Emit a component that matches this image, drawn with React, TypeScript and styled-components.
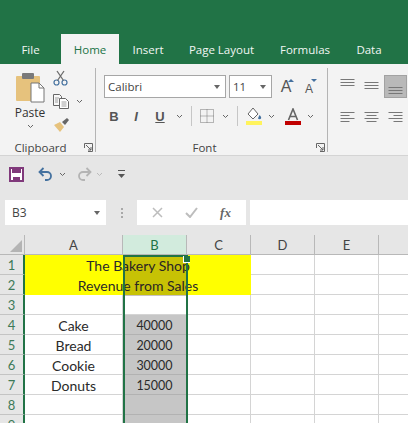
import styled, { createGlobalStyle } from "styled-components";

const GlobalStyle = createGlobalStyle`
  html, body { margin: 0; padding: 0; background: #fff; overflow: hidden; }
`;

const Window = styled.div`
  width: 408px;
  height: 423px;
  overflow: hidden;
  display: flex;
  flex-direction: column;
  font-family: "Open Sans", "Noto Sans", sans-serif;
  color: #333;
`;

const TabBar = styled.div`
  height: 64px;
  flex: none;
  box-sizing: border-box;
  padding: 34px 0 0 0;
  background: #217346;
  display: flex;
`;
const Tab = styled.div<{ $active?: boolean; $w: number }>`
  width: ${(p) => p.$w}px;
  height: 30px;
  flex: none;
  display: flex;
  align-items: center;
  justify-content: center;
  font-size: 11.5px;
  color: ${(p) => (p.$active ? "#217346" : "#f1f6f3")};
  background: ${(p) => (p.$active ? "#f3f3f3" : "transparent")};
`;

const Ribbon = styled.div`
  height: 92px;
  flex: none;
  box-sizing: border-box;
  background: #f3f3f3;
  border-bottom: 1px solid #d4d4d4;
  display: flex;
  padding-top: 4px;
`;
const Group = styled.div<{ $w: number }>`
  width: ${(p) => p.$w}px;
  height: 84px;
  flex: none;
  box-sizing: border-box;
  border-right: 1px solid #b4b4b4;
  display: flex;
  flex-direction: column;
  position: relative;
`;
const GroupBody = styled.div`
  flex: 1;
  display: flex;
`;
const GroupLabel = styled.div`
  height: 18px;
  margin-bottom: -5px;
  font-size: 11.5px;
  line-height: 18px;
  text-align: center;
  color: #444;
  padding-right: 14px;
`;
const Launcher = styled.svg`
  position: absolute;
  right: 2px;
  bottom: 0;
`;

const ClipBoardBody = styled(GroupBody)`
  padding: 2px 0 0 14px;
  gap: 6px;
`;
const PasteBlock = styled.div`
  width: 32px;
  padding-top: 2px;
  display: flex;
  flex-direction: column;
  align-items: center;
`;
const PasteText = styled.div`
  font-size: 12px;
  line-height: 14px;
  margin: 3px 0 4px;
`;
const SmallStack = styled.div`
  display: flex;
  flex-direction: column;
  gap: 8px;
  padding-left: 1px;
`;
const IconRow = styled.div`
  display: flex;
  align-items: center;
  gap: 7px;
`;

const FontBody = styled(GroupBody)`
  flex-direction: column;
  padding: 7px 0 0 8px;
  gap: 8px;
`;
const FontRow = styled.div`
  display: flex;
  align-items: center;
`;
const Combo = styled.div<{ $w: number }>`
  width: ${(p) => p.$w}px;
  height: 23px;
  box-sizing: border-box;
  background: #fff;
  border: 1px solid #a6a6a6;
  display: flex;
  align-items: center;
  justify-content: space-between;
  padding: 0 5px 0 3px;
  font-size: 11.5px;
  color: #444;
  margin-right: 3px;
`;
const Caret = styled.span`
  width: 0;
  height: 0;
  border-left: 3.5px solid transparent;
  border-right: 3.5px solid transparent;
  border-top: 4px solid #666;
`;
const StyleButton = styled.div<{ $w: number; $italic?: boolean; $under?: boolean }>`
  width: ${(p) => p.$w}px;
  font-family: "Liberation Sans", sans-serif;
  font-size: 13px;
  font-weight: 700;
  font-style: ${(p) => (p.$italic ? "italic" : "normal")};
  text-decoration: ${(p) => (p.$under ? "underline" : "none")};
  color: #555;
  text-align: center;
`;
const VRule = styled.div`
  width: 1px;
  height: 20px;
  background: #c6c6c6;
  margin: 0 8px;
`;
const GrowLetter = styled.span<{ $size: number }>`
  font-size: ${(p) => p.$size}px;
  line-height: 1;
  font-family: "Liberation Sans", sans-serif;
  color: #555;
`;
const GrowButton = styled.div<{ $w: number }>`
  width: ${(p) => p.$w}px;
  height: 23px;
  box-sizing: border-box;
  padding-bottom: 3px;
  display: flex;
  align-items: flex-end;
  justify-content: center;
  position: relative;
`;
const Tri = styled.span<{ $down?: boolean }>`
  position: absolute;
  top: 4px;
  right: ${(p) => (p.$down ? 4 : 3)}px;
  width: 0;
  height: 0;
  border-left: 3px solid transparent;
  border-right: 3px solid transparent;
  ${(p) =>
    p.$down
      ? "border-top: 3px solid #44719f;"
      : "border-bottom: 3px solid #44719f;"}
`;

const AlignBody = styled.div`
  display: grid;
  grid-template-columns: repeat(3, 24px);
  grid-auto-rows: 23px;
  row-gap: 7px;
  padding: 7px 0 0 8px;
`;
const AlignCell = styled.div<{ $on?: boolean }>`
  width: 23px;
  height: 23px;
  box-sizing: border-box;
  display: flex;
  align-items: center;
  justify-content: center;
  background: ${(p) => (p.$on ? "#b9b9b9" : "transparent")};
  border: 1px solid ${(p) => (p.$on ? "#a2a2a2" : "transparent")};
`;

const Qat = styled.div`
  height: 34px;
  flex: none;
  box-sizing: border-box;
  background: #e6e6e6;
  display: flex;
  align-items: center;
  padding: 2px 0 0 9px;
`;
const Spacer = styled.div<{ $w: number }>`
  width: ${(p) => p.$w}px;
  flex: none;
`;

const FormulaBar = styled.div`
  height: 45px;
  flex: none;
  box-sizing: border-box;
  background: #e6e6e6;
  display: flex;
  padding: 10px 0 0 5px;
`;
const NameBox = styled.div`
  width: 101px;
  height: 25px;
  box-sizing: border-box;
  background: #fff;
  display: flex;
  align-items: center;
  justify-content: space-between;
  padding: 0 6px 0 7px;
  font-size: 12px;
  color: #444;
`;
const Grip = styled.div`
  width: 31px;
  display: flex;
  flex-direction: column;
  align-items: center;
  justify-content: center;
  gap: 2px;
  height: 25px;
  & > span {
    width: 2px;
    height: 2px;
    background: #a8a8a8;
  }
`;
const FxBox = styled.div`
  width: 109px;
  height: 25px;
  background: #fff;
  display: flex;
  align-items: center;
  justify-content: space-around;
  padding: 0 4px;
  box-sizing: border-box;
`;
const FxText = styled.span`
  font-family: "Liberation Serif", serif;
  font-style: italic;
  font-weight: 700;
  font-size: 13px;
  color: #666;
`;
const FormulaInput = styled.div`
  flex: 1;
  height: 25px;
  background: #fff;
  margin-left: 4px;
`;

const Sheet = styled.div`
  position: relative;
  flex: 1;
  overflow: hidden;
  background: #fff;
  display: grid;
  grid-template-columns: 25px 98px 64px 64px 64px 64px 64px;
  grid-auto-rows: 20px;
  font-family: Lato, "Open Sans", sans-serif;
  font-size: 14px;
  color: #2a2a2a;
`;
const Corner = styled.div`
  background: #e6e6e6;
  border-right: 1px solid #b8b8b8;
  border-bottom: 1px solid #b8b8b8;
  box-sizing: border-box;
  display: flex;
  align-items: flex-end;
  justify-content: flex-end;
  padding: 0 2px 2px 0;
`;
const ColHead = styled.div<{ $on?: boolean }>`
  background: ${(p) => (p.$on ? "#d2ebdd" : "#e6e6e6")};
  color: ${(p) => (p.$on ? "#217346" : "#444")};
  border-right: 1px solid #b8b8b8;
  border-bottom: 1px solid #b8b8b8;
  box-sizing: border-box;
  display: flex;
  align-items: center;
  justify-content: center;
  font-size: 13px;
`;
const RowHead = styled.div`
  background: #e6e6e6;
  color: #3d7a58;
  border-right: 2px solid #217346;
  border-bottom: 1px solid #c4c4c4;
  box-sizing: border-box;
  padding-top: 1px;
  display: flex;
  align-items: center;
  justify-content: center;
  font-size: 13px;
`;
const Cell = styled.div<{ $gray?: boolean }>`
  box-sizing: border-box;
  padding-top: 1px;
  background: ${(p) => (p.$gray ? "#c6c6c6" : "#fff")};
  border-right: 1px solid ${(p) => (p.$gray ? "#b2b2b2" : "#d4d4d4")};
  border-bottom: 1px solid ${(p) => (p.$gray ? "#b2b2b2" : "#d4d4d4")};
  display: flex;
  align-items: center;
  justify-content: center;
  white-space: nowrap;
  font-size: ${(p) => (p.$gray ? "12.5px" : "14px")};
`;
const MergedTitle = styled.div`
  grid-column: span 3;
  box-sizing: border-box;
  padding-top: 1px;
  background: #ffff00;
  display: flex;
  align-items: center;
  justify-content: center;
  white-space: nowrap;
`;
const SelectionTint = styled.div`
  position: absolute;
  left: 125px;
  top: 21px;
  width: 61px;
  height: 40px;
  background: rgba(40, 20, 20, 0.26);
`;
const SelectionFrame = styled.div`
  position: absolute;
  left: 123px;
  top: 20px;
  width: 65px;
  height: 200px;
  box-sizing: border-box;
  border: 2px solid #217346;
  border-bottom: none;
`;
const FillHandle = styled.div`
  position: absolute;
  right: -4px;
  top: -1px;
  width: 6px;
  height: 6px;
  background: #217346;
  border-left: 1px solid #fff;
  border-bottom: 1px solid #fff;
`;

const Chevron = ({ color = "#666" }: { color?: string }) => (
  <svg width="7" height="5" viewBox="0 0 7 5">
    <path d="M1 1l2.5 2.5L6 1" fill="none" stroke={color} strokeWidth="1" />
  </svg>
);

const LauncherIcon = () => (
  <Launcher width="9" height="9" viewBox="0 0 9 9">
    <path d="M.5 5V.5H8.500V8.500H4" fill="none" stroke="#666" />
    <path d="M2 2l5 5M7 4v3H4" fill="none" stroke="#666" />
  </Launcher>
);

const PasteIcon = () => (
  <svg width="29" height="31" viewBox="0 0 29 31">
    <rect x="0" y="4" width="24" height="25" rx="1" fill="#e6c27d" />
    <rect x="6" y="1" width="12" height="6" rx="1" fill="#7a7a7a" />
    <path d="M15 11h8l5 5v14H15z" fill="#fff" stroke="#777" />
    <path d="M23 11v5h5" fill="none" stroke="#777" />
  </svg>
);
const ScissorsIcon = () => (
  <svg width="15" height="16" viewBox="0 0 15 16">
    <circle cx="3.500" cy="12.500" r="2.500" fill="none" stroke="#44719f" strokeWidth="1.200" />
    <circle cx="11.500" cy="12.500" r="2.500" fill="none" stroke="#44719f" strokeWidth="1.200" />
    <path d="M4.500 10.500L11 1M10.500 10.500L4 1" stroke="#6b6b6b" strokeWidth="1.300" />
  </svg>
);
const CopyIcon = () => (
  <svg width="16" height="15" viewBox="0 0 16 15">
    <path d="M.5.500h6l2 2v9h-8z" fill="#f8f8f8" stroke="#666" />
    <path d="M6.500 4.500h6l3 3v7h-9z" fill="#fff" stroke="#666" />
    <path d="M2 4h4M2 6h3M2 8h3M8.500 8h5M8.500 10h5M8.500 12h5" stroke="#888" strokeWidth=".8" />
  </svg>
);
const BrushIcon = () => (
  <svg width="17" height="15" viewBox="0 0 17 15">
    <path d="M1 8l6-3 4 5-4 5z" fill="#e6c27d" />
    <path d="M9 5l5-4 2 2-4 5z" fill="#666" />
  </svg>
);
const BordersIcon = () => (
  <svg width="14" height="14" viewBox="0 0 14 14">
    <path d="M.500.500h13v13H.500zM7 .500v13M.500 7h13" fill="none" stroke="#777" strokeDasharray="1 1" />
  </svg>
);
const FillIcon = () => (
  <svg width="17" height="18" viewBox="0 0 17 18">
    <path d="M7 1L2 7l5 5 5-5z" fill="#fff" stroke="#666" />
    <path d="M13.500 8c1.500 1.500 2 2.500 1.500 3.500s-2.500 1-3-.200z" fill="#44719f" />
    <rect x="0" y="14" width="16" height="4" fill="#fff35c" />
  </svg>
);
const FontColorIcon = () => (
  <svg width="16" height="17" viewBox="0 0 16 17">
    <path d="M3.500 12L8 1l4.500 11M5 8.500h6" fill="none" stroke="#666" strokeWidth="1.600" />
    <rect x="0" y="13" width="16" height="4" fill="#c00000" />
  </svg>
);
const Lines = ({
  widths,
  top,
  side = "center",
}: {
  widths: number[];
  top: number;
  side?: "left" | "center" | "right";
}) => (
  <svg width="15" height="15" viewBox="0 0 15 15">
    {widths.map((w, i) => (
      <rect
        key={i}
        x={side === "left" ? 0.5 : side === "right" ? 14.5 - w : (15 - w) / 2}
        y={top + i * 3}
        width={w}
        height="1"
        fill="#777"
      />
    ))}
  </svg>
);
const SaveIcon = () => (
  <svg width="15" height="15" viewBox="0 0 15 15">
    <path d="M1 1h13v13H1z" fill="#fff" stroke="#80397b" strokeWidth="2" />
    <rect x="3" y="2" width="9" height="4" fill="#80397b" />
    <rect x="4" y="10" width="7" height="4" fill="#80397b" />
  </svg>
);
const UndoIcon = ({ color, flip }: { color: string; flip?: boolean }) => (
  <svg width="15" height="14" viewBox="0 0 15 14" style={flip ? { transform: "scaleX(-1)" } : undefined}>
    <path d="M5.500 1L1.500 5l4 4M2 5h7a4 4 0 0 1 0 8H7" fill="none" stroke={color} strokeWidth="1.800" />
  </svg>
);
const CustomizeIcon = () => (
  <svg width="7" height="9" viewBox="0 0 7 9">
    <rect x="0" y="0" width="7" height="1" fill="#555" />
    <path d="M0 4h7L3.500 8z" fill="#555" />
  </svg>
);
const CrossIcon = () => (
  <svg width="11" height="11" viewBox="0 0 11 11">
    <path d="M1 1l9 9M10 1l-9 9" stroke="#bdbdbd" strokeWidth="1.500" />
  </svg>
);
const CheckIcon = () => (
  <svg width="13" height="11" viewBox="0 0 13 11">
    <path d="M1 6l4 4 7-9" fill="none" stroke="#bdbdbd" strokeWidth="2" />
  </svg>
);

const columns = ["A", "B", "C", "D", "E", ""];
const items: [string, string][] = [
  ["Cake", "40000"],
  ["Bread", "20000"],
  ["Cookie", "30000"],
  ["Donuts", "15000"],
];

const Row = ({ n, a = "", b = "", gray = true }: { n: number; a?: string; b?: string; gray?: boolean }) => (
  <>
    <RowHead>{n}</RowHead>
    <Cell>{a}</Cell>
    <Cell $gray={gray}>{b}</Cell>
    <Cell />
    <Cell />
    <Cell />
    <Cell />
  </>
);

const TitleRow = ({ n, text }: { n: number; text: string }) => (
  <>
    <RowHead>{n}</RowHead>
    <MergedTitle>{text}</MergedTitle>
    <Cell />
    <Cell />
    <Cell />
  </>
);

export default function App() {
  return (
    <Window>
      <GlobalStyle />
      <TabBar>
        <Tab $w={61}>File</Tab>
        <Tab $w={58} $active>Home</Tab>
        <Tab $w={58}>Insert</Tab>
        <Tab $w={89}>Page Layout</Tab>
        <Tab $w={78}>Formulas</Tab>
        <Tab $w={50}>Data</Tab>
      </TabBar>

      <Ribbon>
        <Group $w={96}>
          <ClipBoardBody>
            <PasteBlock>
              <PasteIcon />
              <PasteText>Paste</PasteText>
              <Chevron />
            </PasteBlock>
            <SmallStack>
              <ScissorsIcon />
              <IconRow>
                <CopyIcon />
                <Chevron />
              </IconRow>
              <BrushIcon />
            </SmallStack>
          </ClipBoardBody>
          <GroupLabel>Clipboard</GroupLabel>
          <LauncherIcon />
        </Group>

        <Group $w={232}>
          <FontBody>
            <FontRow>
              <Combo $w={122}>Calibri<Caret /></Combo>
              <Combo $w={43}>11<Caret /></Combo>
              <GrowButton $w={22}>
                <GrowLetter $size={16}>A</GrowLetter>
                <Tri />
              </GrowButton>
              <GrowButton $w={24}>
                <GrowLetter $size={12}>A</GrowLetter>
                <Tri $down />
              </GrowButton>
            </FontRow>
            <FontRow>
              <StyleButton $w={20}>B</StyleButton>
              <StyleButton $w={24} $italic>I</StyleButton>
              <StyleButton $w={24} $under>U</StyleButton>
              <Spacer $w={4} />
              <Chevron />
              <VRule />
              <BordersIcon />
              <Spacer $w={8} />
              <Chevron />
              <VRule />
              <FillIcon />
              <Spacer $w={5} />
              <Chevron />
              <Spacer $w={10} />
              <FontColorIcon />
              <Spacer $w={6} />
              <Chevron />
            </FontRow>
          </FontBody>
          <GroupLabel>Font</GroupLabel>
          <LauncherIcon />
        </Group>

        <AlignBody>
          <AlignCell><Lines widths={[14, 14, 14]} top={0} /></AlignCell>
          <AlignCell><Lines widths={[14, 14, 14]} top={3} /></AlignCell>
          <AlignCell $on><Lines widths={[14, 14, 14]} top={8} /></AlignCell>
          <AlignCell><Lines widths={[14, 9, 14, 9]} top={3} side="left" /></AlignCell>
          <AlignCell><Lines widths={[14, 10, 14, 10]} top={3} /></AlignCell>
          <AlignCell><Lines widths={[14, 9, 14, 9]} top={3} side="right" /></AlignCell>
        </AlignBody>
      </Ribbon>

      <Qat>
        <SaveIcon />
        <Spacer $w={14} />
        <UndoIcon color="#44719f" />
        <Spacer $w={6} />
        <Chevron />
        <Spacer $w={11} />
        <UndoIcon color="#b4b4b4" flip />
        <Spacer $w={4} />
        <Chevron color="#bbb" />
        <Spacer $w={15} />
        <CustomizeIcon />
      </Qat>

      <FormulaBar>
        <NameBox>B3<Caret /></NameBox>
        <Grip><span /><span /><span /></Grip>
        <FxBox>
          <CrossIcon />
          <CheckIcon />
          <FxText>fx</FxText>
        </FxBox>
        <FormulaInput />
      </FormulaBar>

      <Sheet>
        <Corner>
          <svg width="12" height="12" viewBox="0 0 12 12">
            <path d="M12 0v12H0z" fill="#b4b4b4" />
          </svg>
        </Corner>
        {columns.map((c, i) => (
          <ColHead key={i} $on={c === "B"}>{c}</ColHead>
        ))}

        <TitleRow n={1} text="The Bakery Shop" />
        <TitleRow n={2} text="Revenue from Sales" />
        <Row n={3} gray={false} />
        {items.map(([a, b], i) => (
          <Row key={a} n={i + 4} a={a} b={b} />
        ))}
        <Row n={8} />
        <Row n={9} />

        <SelectionTint />
        <SelectionFrame>
          <FillHandle />
        </SelectionFrame>
      </Sheet>
    </Window>
  );
}
